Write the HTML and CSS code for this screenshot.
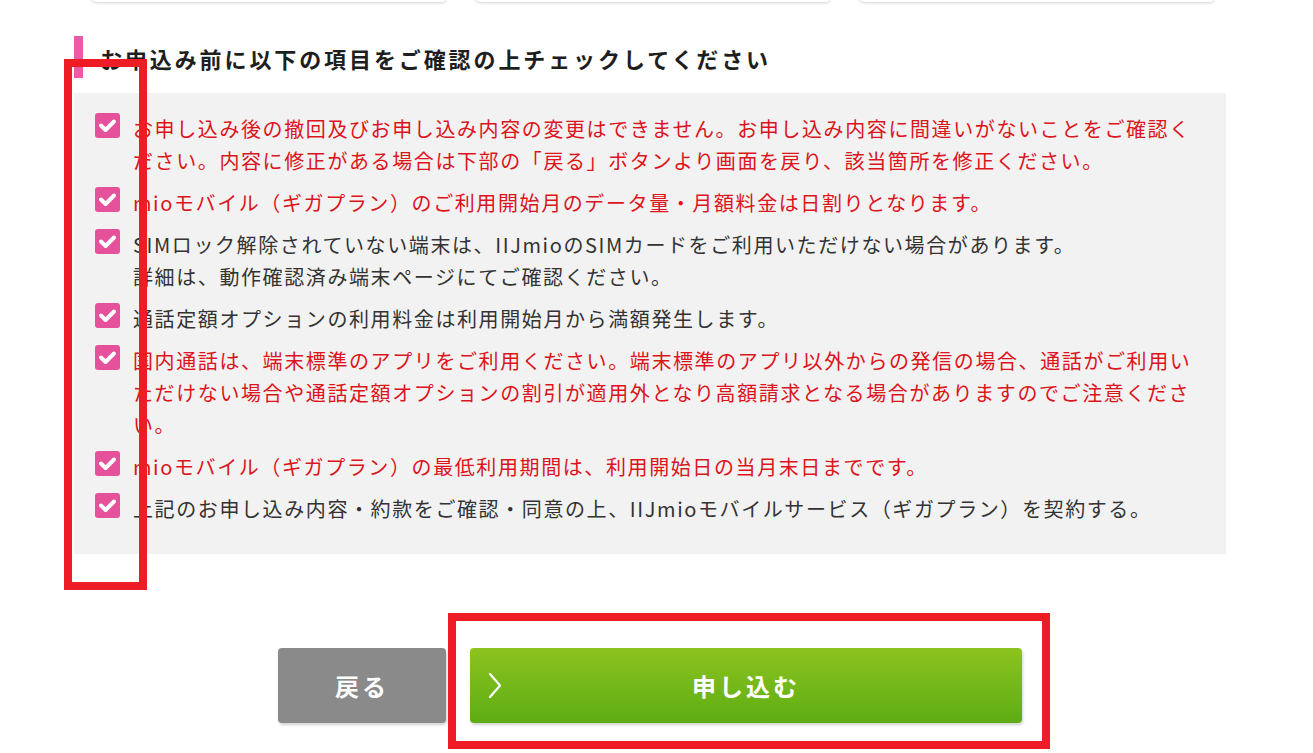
FILE: index.html
```html
<!DOCTYPE html>
<html lang="ja">
<head>
<meta charset="utf-8">
<title>お申込み確認</title>
<link rel="stylesheet" href="styles.css">
</head>
<body>
<div class="cards">
  <div class="card"></div>
  <div class="card"></div>
  <div class="card"></div>
</div>
<section class="confirm">
  <h2 class="heading">お申込み前に以下の項目をご確認の上チェックしてください</h2>
  <div class="box">
    <ul class="checks">
      <li class="item red"><span class="cb"><svg viewBox="0 0 25 25" width="25" height="25"><rect width="25" height="25" rx="3" fill="#e5519b"/><path d="M6 12.5 L10.6 17 L19 8.5" fill="none" stroke="#fff" stroke-width="4" stroke-linecap="round" stroke-linejoin="round"/></svg></span><p>お申し込み後の撤回及びお申し込み内容の変更はできません。お申し込み内容に間違いがないことをご確認ください。内容に修正がある場合は下部の「戻る」ボタンより画面を戻り、該当箇所を修正ください。</p></li>
      <li class="item red"><span class="cb"><svg viewBox="0 0 25 25" width="25" height="25"><rect width="25" height="25" rx="3" fill="#e5519b"/><path d="M6 12.5 L10.6 17 L19 8.5" fill="none" stroke="#fff" stroke-width="4" stroke-linecap="round" stroke-linejoin="round"/></svg></span><p>mioモバイル（ギガプラン）のご利用開始月のデータ量・月額料金は日割りとなります。</p></li>
      <li class="item"><span class="cb"><svg viewBox="0 0 25 25" width="25" height="25"><rect width="25" height="25" rx="3" fill="#e5519b"/><path d="M6 12.5 L10.6 17 L19 8.5" fill="none" stroke="#fff" stroke-width="4" stroke-linecap="round" stroke-linejoin="round"/></svg></span><p>SIMロック解除されていない端末は、IIJmioのSIMカードをご利用いただけない場合があります。<br>詳細は、動作確認済み端末ページにてご確認ください。</p></li>
      <li class="item"><span class="cb"><svg viewBox="0 0 25 25" width="25" height="25"><rect width="25" height="25" rx="3" fill="#e5519b"/><path d="M6 12.5 L10.6 17 L19 8.5" fill="none" stroke="#fff" stroke-width="4" stroke-linecap="round" stroke-linejoin="round"/></svg></span><p>通話定額オプションの利用料金は利用開始月から満額発生します。</p></li>
      <li class="item red"><span class="cb"><svg viewBox="0 0 25 25" width="25" height="25"><rect width="25" height="25" rx="3" fill="#e5519b"/><path d="M6 12.5 L10.6 17 L19 8.5" fill="none" stroke="#fff" stroke-width="4" stroke-linecap="round" stroke-linejoin="round"/></svg></span><p>国内通話は、端末標準のアプリをご利用ください。端末標準のアプリ以外からの発信の場合、通話がご利用いただけない場合や通話定額オプションの割引が適用外となり高額請求となる場合がありますのでご注意ください。</p></li>
      <li class="item red"><span class="cb"><svg viewBox="0 0 25 25" width="25" height="25"><rect width="25" height="25" rx="3" fill="#e5519b"/><path d="M6 12.5 L10.6 17 L19 8.5" fill="none" stroke="#fff" stroke-width="4" stroke-linecap="round" stroke-linejoin="round"/></svg></span><p>mioモバイル（ギガプラン）の最低利用期間は、利用開始日の当月末日までです。</p></li>
      <li class="item"><span class="cb"><svg viewBox="0 0 25 25" width="25" height="25"><rect width="25" height="25" rx="3" fill="#e5519b"/><path d="M6 12.5 L10.6 17 L19 8.5" fill="none" stroke="#fff" stroke-width="4" stroke-linecap="round" stroke-linejoin="round"/></svg></span><p>上記のお申し込み内容・約款をご確認・同意の上、IIJmioモバイルサービス（ギガプラン）を契約する。</p></li>
    </ul>
  </div>
  <div class="actions">
    <button class="btn back">戻る</button>
    <button class="btn submit"><svg class="chev" viewBox="0 0 14 25" width="14" height="25"><path d="M2 1 L12 12.5 L2 24" fill="none" stroke="#fff" stroke-width="2.2" stroke-linecap="round" stroke-linejoin="round"/></svg>申し込む</button>
  </div>
</section>
<div class="mark mark-checks"></div>
<div class="mark mark-submit"></div>
</body>
</html>
```

FILE: styles.css
```css
* { box-sizing: border-box; }
html, body { margin: 0; padding: 0; background: #fff; }
body {
  font-family: "Noto Sans CJK JP", "Noto Sans", sans-serif;
  color: #333;
  width: 1313px;
  height: 753px;
  overflow: hidden;
  position: relative;
}
.cards {
  display: flex;
  gap: 30px;
  padding-left: 92px;
  margin-top: -14px;
}
.card {
  width: 354px;
  height: 16px;
  background: #fff;
  border-radius: 4px;
  box-shadow: 0 1px 3px rgba(0,0,0,0.18);
}
.confirm {
  margin-left: 74px;
  width: 1152px;
  margin-top: 34px;
}
.heading {
  margin: 0;
  height: 42px;
  border-left: 9px solid #ee5aa6;
  padding-left: 17px;
  font-size: 22px;
  font-weight: 700;
  letter-spacing: 2.9px;
  line-height: 45px;
  color: #1e1e1e;
}
.box {
  margin-top: 15px;
  background: #f2f2f2;
  padding: 20px 25px 29px 21px;
}
.checks {
  list-style: none;
  margin: 0;
  padding: 0;
  display: flex;
  flex-direction: column;
  gap: 10px;
}
.item {
  display: flex;
  gap: 13px;
  align-items: flex-start;
}
.cb { flex: 0 0 25px; height: 25px; display: block; }
.cb svg { display: block; }
.item p {
  margin: 0;
  font-size: 20px;
  line-height: 32px;
  letter-spacing: 1.6px;
  color: #333;
}
.item.red p { color: #dc141c; }
.actions {
  display: flex;
  justify-content: center;
  gap: 24px;
  margin-top: 94px;
}
.btn {
  border: none;
  height: 75px;
  border-radius: 4px;
  color: #fff;
  font-family: "Noto Sans CJK JP", "Noto Sans", sans-serif;
  font-size: 24px;
  font-weight: 700;
  letter-spacing: 3px;
  box-shadow: 1px 2px 3px rgba(0,0,0,0.18);
  position: relative;
}
.back {
  width: 168px;
  background: #8a8a8a;
}
.submit {
  width: 552px;
  background: linear-gradient(#8dc31f, #5dad14);
}
.chev {
  position: absolute;
  left: 18px;
  top: 25px;
}
.mark {
  position: absolute;
  border: 8px solid #ee1c25;
  pointer-events: none;
}
.mark-checks { left: 64px; top: 59px; width: 83px; height: 531px; }
.mark-submit { left: 448px; top: 613px; width: 602px; height: 136px; }
```
